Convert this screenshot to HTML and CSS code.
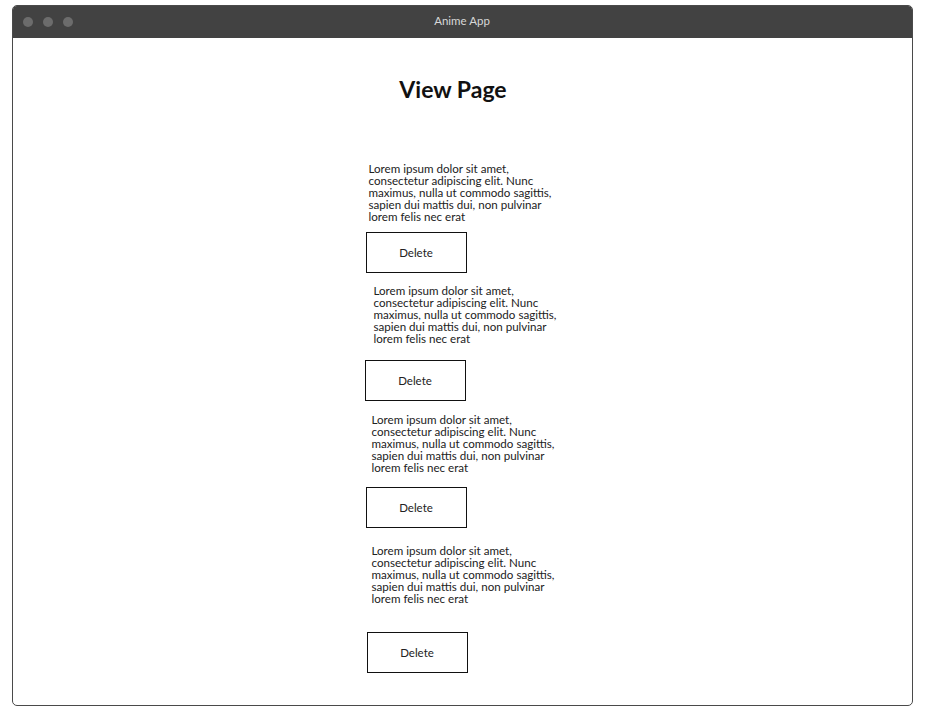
FILE: index.html
```html
<!DOCTYPE html>
<html>
<head>
<meta charset="utf-8">
<link rel="stylesheet" href="styles.css">
</head>
<body>
<div class="window">
  <div class="titlebar">
    <div class="dots"><span class="dot"></span><span class="dot"></span><span class="dot"></span></div>
    <div class="title">Anime App</div>
  </div>
  <div class="content">
    <h1 class="heading">View Page</h1>
    <div class="list">
      <div class="item item-1">
        <p class="desc">Lorem ipsum dolor sit amet,<br>consectetur adipiscing elit. Nunc<br>maximus, nulla ut commodo sagittis,<br>sapien dui mattis dui, non pulvinar<br>lorem felis nec erat</p>
        <button class="btn">Delete</button>
      </div>
      <div class="item item-2">
        <p class="desc">Lorem ipsum dolor sit amet,<br>consectetur adipiscing elit. Nunc<br>maximus, nulla ut commodo sagittis,<br>sapien dui mattis dui, non pulvinar<br>lorem felis nec erat</p>
        <button class="btn">Delete</button>
      </div>
      <div class="item item-3">
        <p class="desc">Lorem ipsum dolor sit amet,<br>consectetur adipiscing elit. Nunc<br>maximus, nulla ut commodo sagittis,<br>sapien dui mattis dui, non pulvinar<br>lorem felis nec erat</p>
        <button class="btn">Delete</button>
      </div>
      <div class="item item-4">
        <p class="desc">Lorem ipsum dolor sit amet,<br>consectetur adipiscing elit. Nunc<br>maximus, nulla ut commodo sagittis,<br>sapien dui mattis dui, non pulvinar<br>lorem felis nec erat</p>
        <button class="btn">Delete</button>
      </div>
    </div>
  </div>
</div>
</body>
</html>
```
FILE: styles.css
```css
* { box-sizing: border-box; }
html, body { margin: 0; padding: 0; background: #fff; }
body {
  font-family: Lato, "Open Sans", sans-serif;
  color: #222;
  padding: 5px 15px 0 12px;
}
.window {
  width: 901px;
  height: 701px;
  border: 1px solid #4a4a4a;
  border-radius: 5px;
  overflow: hidden;
  display: flex;
  flex-direction: column;
}
.titlebar {
  height: 32px;
  background: #424242;
  display: flex;
  align-items: center;
  position: relative;
  flex-shrink: 0;
}
.dots {
  display: flex;
  gap: 10px;
  padding-left: 10px;
}
.dot {
  width: 10px;
  height: 10px;
  border-radius: 50%;
  background: #6c6c6c;
}
.title {
  position: absolute;
  left: 0;
  right: 0;
  top: 0;
  bottom: 3px;
  display: flex;
  align-items: center;
  justify-content: center;
  color: #d8d8d8;
  font-size: 11.5px;
  padding-right: 1px;
}
.content {
  flex: 1;
  display: flex;
  flex-direction: column;
  align-items: center;
}
.heading {
  margin: 37px 0 0 0;
  font-size: 23px;
  line-height: 28px;
  font-weight: 700;
  color: #111;
  padding-right: 19px;
}
.list {
  margin-top: 60px;
  width: 220px;
  margin-left: 26px;
  display: flex;
  flex-direction: column;
}
.desc {
  margin: 0;
  font-size: 11.6px;
  line-height: 12px;
  color: #222;
}
.btn {
  display: block;
  width: 101px;
  height: 41px;
  border: 1px solid #111;
  background: #fff;
  font-family: inherit;
  font-size: 11.5px;
  color: #222;
  padding: 0;
}
.item-1 .desc { margin-left: 3px; }
.item-1 .btn { margin-top: 9px; }
.item-2 { margin-top: 12px; }
.item-2 .desc { margin-left: 8px; }
.item-2 .btn { margin-top: 15px; margin-left: -1px; }
.item-3 { margin-top: 13px; }
.item-3 .desc { margin-left: 6px; }
.item-3 .btn { margin-top: 13px; }
.item-4 { margin-top: 17px; }
.item-4 .desc { margin-left: 6px; }
.item-4 .btn { margin-top: 27px; margin-left: 1px; }
```
